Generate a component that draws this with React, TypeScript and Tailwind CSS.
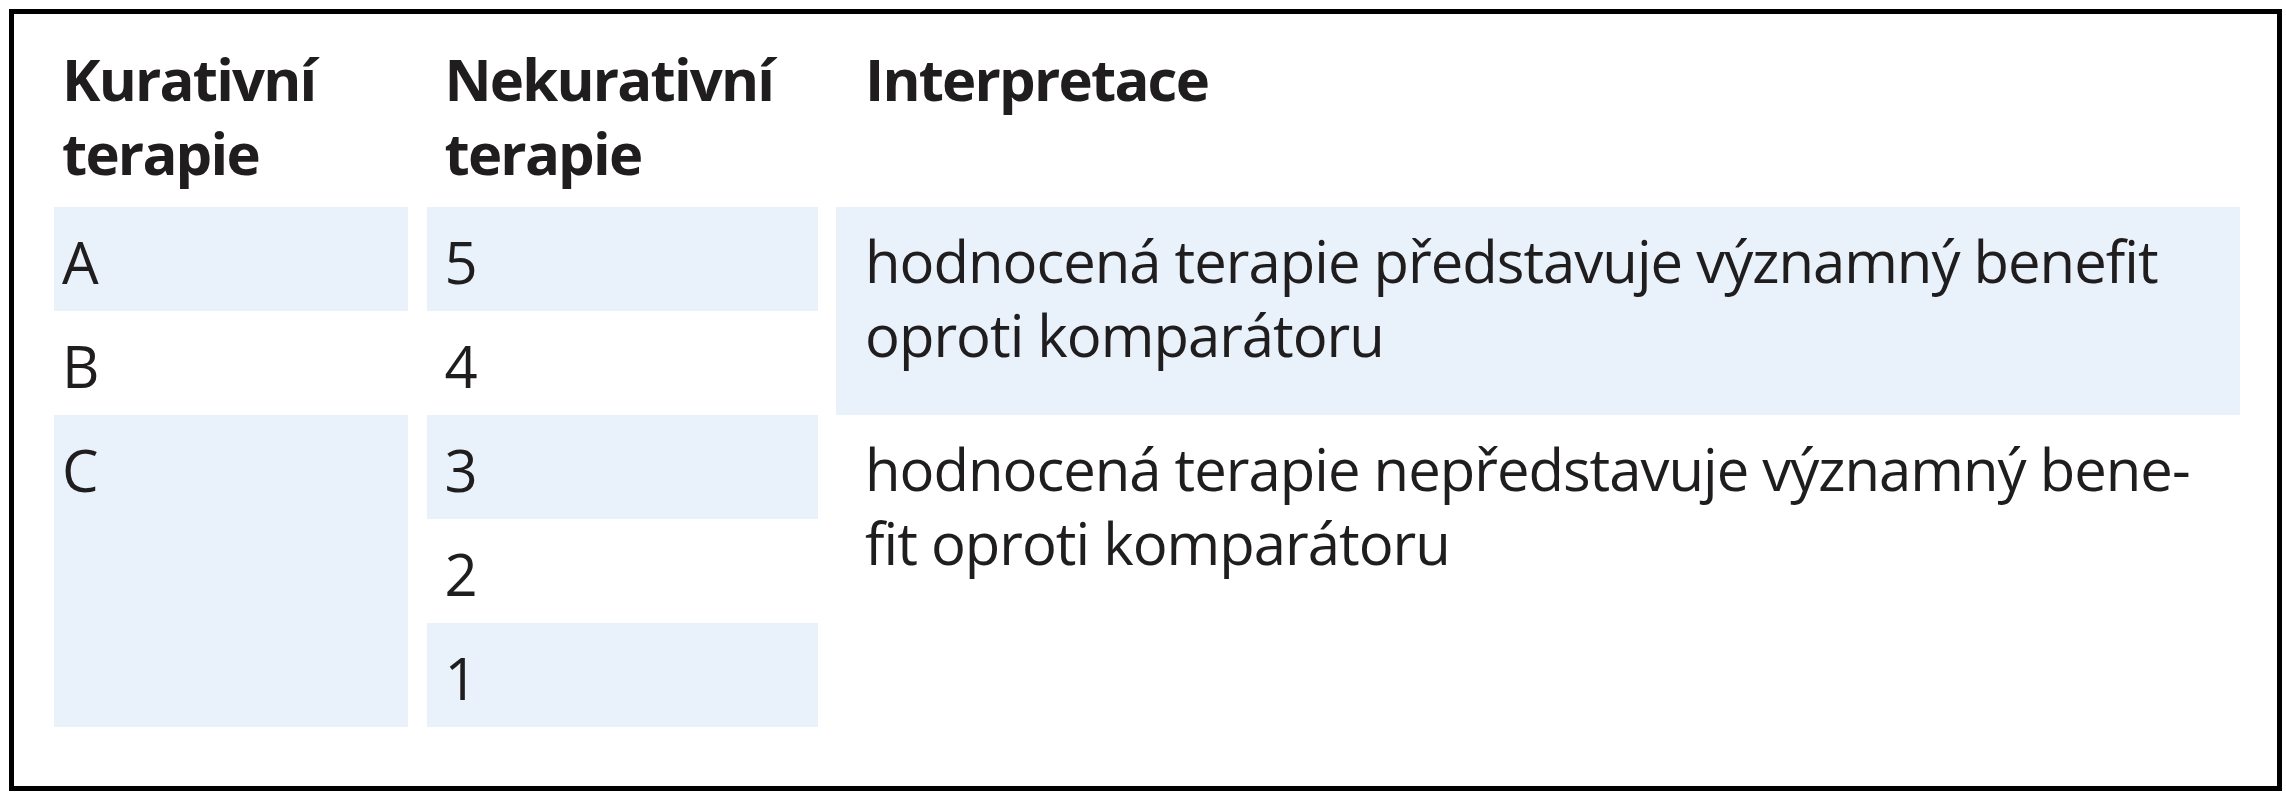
import React from 'react';

const cellBg = 'bg-[#e9f1fa]';

export default function App() {
  return (
    <div className="min-h-screen bg-white pt-[9px] pl-[9px]">
      <div
        className="w-[2273px] h-[782px] border-[5px] border-black pl-[40px] pr-[37px] pt-[28px] text-[#1f1d1e]"
        style={{ fontFamily: '"Open Sans", "Noto Sans", sans-serif' }}
      >
        <div className="grid grid-cols-[354px_391px_1fr] gap-x-[18.5px] text-[58px] leading-[74px] tracking-[-1px]">
          {/* header */}
          <div className="pl-[8px] pb-[17px] font-bold tracking-[-1.8px]">
            Kurativní
            <br />
            terapie
          </div>
          <div className="pl-[18px] pb-[17px] font-bold tracking-[-1.8px]">
            Nekurativní
            <br />
            terapie
          </div>
          <div className="pl-[29px] pb-[17px] font-bold tracking-[-1.8px]">Interpretace</div>

          {/* row 1 */}
          <div className={`${cellBg} pl-[8px] pt-[18px] pb-[12px]`}>A</div>
          <div className={`${cellBg} pl-[18px] pt-[18px] pb-[12px]`}>5</div>
          <div className={`${cellBg} row-span-2 pl-[29px] pt-[17px] whitespace-nowrap`}>
            hodnocená terapie představuje významný benefit
            <br />
            oproti komparátoru
          </div>

          {/* row 2 */}
          <div className="pl-[8px] pt-[18px] pb-[12px]">B</div>
          <div className="pl-[18px] pt-[18px] pb-[12px]">4</div>

          {/* row 3 */}
          <div className={`${cellBg} row-span-3 pl-[8px] pt-[18px]`}>C</div>
          <div className={`${cellBg} pl-[18px] pt-[18px] pb-[12px]`}>3</div>
          <div className="row-span-3 pl-[29px] pt-[17px] whitespace-nowrap">
            hodnocená terapie nepředstavuje významný bene-
            <br />
            fit oproti komparátoru
          </div>

          {/* row 4 */}
          <div className="pl-[18px] pt-[18px] pb-[12px]">2</div>

          {/* row 5 */}
          <div className={`${cellBg} pl-[18px] pt-[18px] pb-[12px]`}>1</div>
        </div>
      </div>
    </div>
  );
}
